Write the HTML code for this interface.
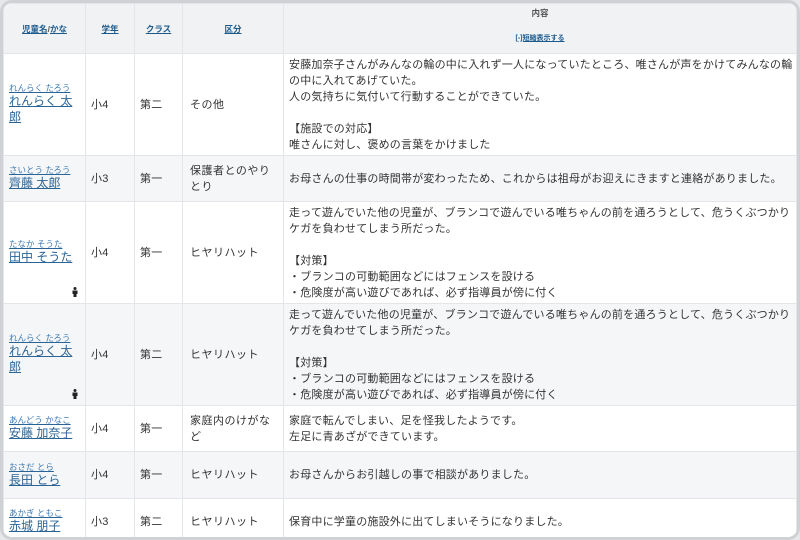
<!DOCTYPE html>
<html><head><meta charset="utf-8"><style>
*{margin:0;padding:0;box-sizing:border-box}
body{width:800px;height:534px;overflow:hidden;background:#e6e7e9;font-family:"Liberation Sans","Noto Sans CJK JP",sans-serif;color:#333}
.frame{position:absolute;left:0;top:0;width:800px;height:540px;border:3px solid #cfd1d4;border-radius:12px;background:#fff;overflow:hidden}
table{border-collapse:collapse;table-layout:fixed;width:794px;font-size:11px;letter-spacing:0.2px;line-height:16px}
td,th{border:1px solid #e3e5e8;vertical-align:middle;padding:0 5px}
td:last-child{padding-right:2px}
td:nth-child(4){padding:0 2px 0 7px;letter-spacing:0.5px;white-space:nowrap}
th{background:#f0f2f4;font-size:8.5px;font-weight:bold;color:#555;height:50px;letter-spacing:0}
th a,td a{color:#2a6496;text-decoration:underline}
th a{color:#1d5a8c}
tr.g td{background:#f5f6f8}
.f{font-size:8.5px;line-height:11px;display:block;color:#3d7ab3;letter-spacing:0}
.n{font-size:12px;line-height:15px;letter-spacing:0}
td.nm{position:relative}
.ic{position:absolute;right:6px;bottom:6px;width:8px;height:10px}
</style></head><body><div class="frame">
<table>
<colgroup><col style="width:82px"><col style="width:49px"><col style="width:48px"><col style="width:101px"><col></colgroup>
<tr><th><a>児童名</a>/<a>かな</a></th><th><a>学年</a></th><th><a>クラス</a></th><th><a>区分</a></th><th><div style="margin-top:-6px">内容</div><div style="margin-top:10px;font-size:7px"><a>[-]短縮表示する</a></div></th></tr>
<tr style="height:102px"><td class="nm"><a><span class="f">れんらく たろう</span><span class="n">れんらく 太郎</span></a></td><td>小4</td><td>第二</td><td>その他</td><td>安藤加奈子さんがみんなの輪の中に入れず一人になっていたところ、唯さんが声をかけてみんなの輪の中に入れてあげていた。<br>人の気持ちに気付いて行動することができていた。<br><br>【施設での対応】<br>唯さんに対し、褒めの言葉をかけました</td></tr>
<tr class="g" style="height:46px"><td class="nm"><a><span class="f">さいとう たろう</span><span class="n">齊藤 太郎</span></a></td><td>小3</td><td>第一</td><td>保護者とのやり<br>とり</td><td>お母さんの仕事の時間帯が変わったため、これからは祖母がお迎えにきますと連絡がありました。</td></tr>
<tr style="height:102px"><td class="nm"><a><span class="f">たなか そうた</span><span class="n">田中 そうた</span></a><svg class="ic" viewBox="0 0 8 10"><circle cx="4" cy="1.5" r="1.5" fill="#222"/><path d="M1.5 3.5h5v3.5h-1v3h-3v-3h-1z" fill="#222"/></svg></td><td>小4</td><td>第一</td><td>ヒヤリハット</td><td>走って遊んでいた他の児童が、ブランコで遊んでいる唯ちゃんの前を通ろうとして、危うくぶつかりケガを負わせてしまう所だった。<br><br>【対策】<br>・ブランコの可動範囲などにはフェンスを設ける<br>・危険度が高い遊びであれば、必ず指導員が傍に付く</td></tr>
<tr class="g" style="height:102px"><td class="nm"><a><span class="f">れんらく たろう</span><span class="n">れんらく 太郎</span></a><svg class="ic" viewBox="0 0 8 10"><circle cx="4" cy="1.5" r="1.5" fill="#222"/><path d="M1.5 3.5h5v3.5h-1v3h-3v-3h-1z" fill="#222"/></svg></td><td>小4</td><td>第二</td><td>ヒヤリハット</td><td>走って遊んでいた他の児童が、ブランコで遊んでいる唯ちゃんの前を通ろうとして、危うくぶつかりケガを負わせてしまう所だった。<br><br>【対策】<br>・ブランコの可動範囲などにはフェンスを設ける<br>・危険度が高い遊びであれば、必ず指導員が傍に付く</td></tr>
<tr style="height:46px"><td class="nm"><a><span class="f">あんどう かなこ</span><span class="n">安藤 加奈子</span></a></td><td>小4</td><td>第一</td><td>家庭内のけがな<br>ど</td><td>家庭で転んでしまい、足を怪我したようです。<br>左足に青あざができています。</td></tr>
<tr class="g" style="height:47px"><td class="nm"><a><span class="f">おさだ とら</span><span class="n">長田 とら</span></a></td><td>小4</td><td>第一</td><td>ヒヤリハット</td><td>お母さんからお引越しの事で相談がありました。</td></tr>
<tr style="height:46px"><td class="nm"><a><span class="f">あかぎ ともこ</span><span class="n">赤城 朋子</span></a></td><td>小3</td><td>第二</td><td>ヒヤリハット</td><td>保育中に学童の施設外に出てしまいそうになりました。</td></tr>
</table></div></body></html>
